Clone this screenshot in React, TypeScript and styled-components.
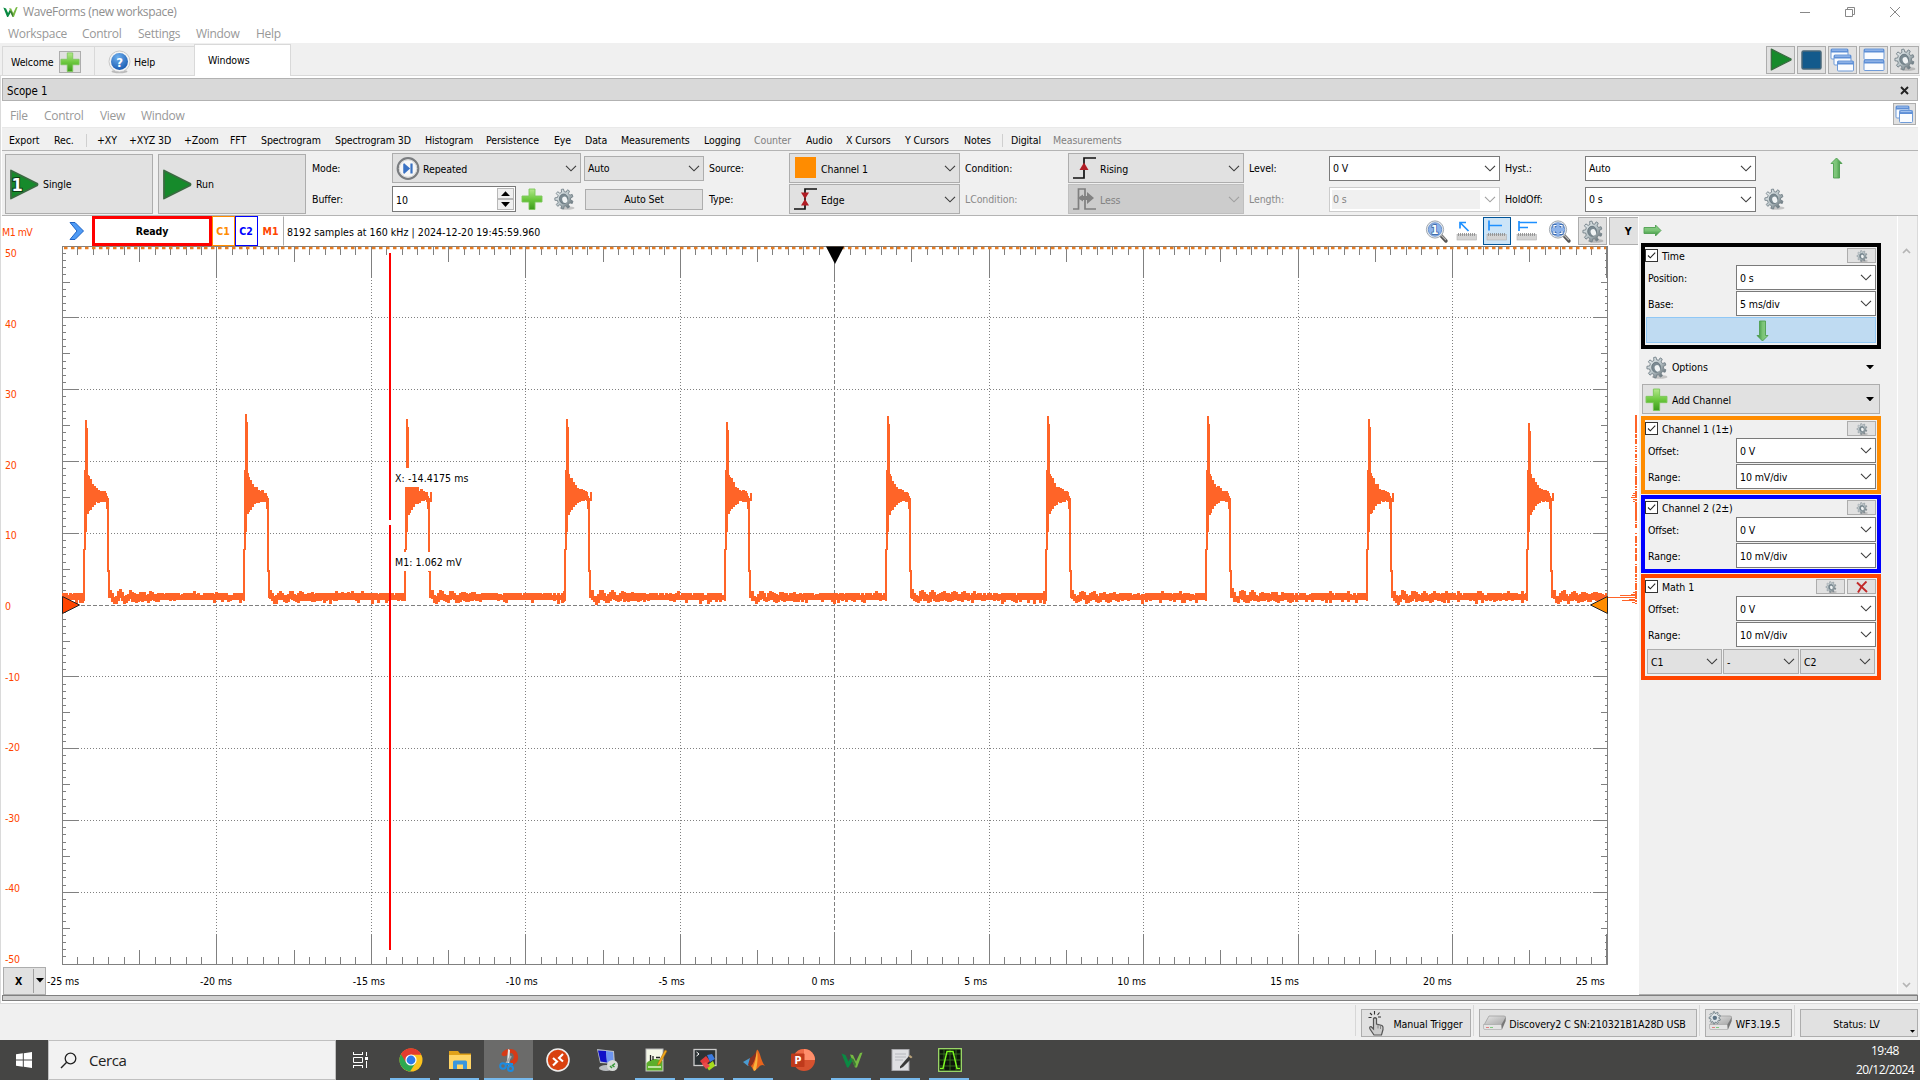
import React from "react";
import styled, { createGlobalStyle } from "styled-components";

const UI = `"DejaVu Sans Condensed", "DejaVu Sans", "Noto Sans", sans-serif`;
const SEGOE = `"Open Sans", "Noto Sans", sans-serif`;

const GlobalStyle = createGlobalStyle`
  * { box-sizing: border-box; }
  body { margin: 0; background: #fff; overflow: hidden; }
  svg { display: block; flex: none; }
`;

/* ---------- shell ---------- */
const Screen = styled.div`
  width: 1920px;
  height: 1080px;
  display: flex;
  flex-direction: column;
  background: #fff;
  font-family: ${UI};
  font-stretch: condensed;
  font-size: 10.5px;
  letter-spacing: -0.1px;
  color: #000;
  white-space: pre;
  overflow: hidden;
`;
const TitleBar = styled.div`
  height: 22px;
  display: flex;
  align-items: center;
  padding: 1px 20px 0 3px;
  gap: 5px;
  font-family: ${SEGOE};
  font-stretch: normal;
  font-size: 12px;
  letter-spacing: -0.35px;
  color: #8f8f8f;
`;
const WindowButtons = styled.div`
  margin-left: auto;
  display: flex;
  align-items: center;
  gap: 35px;
`;
const MenuBar = styled.div<{ $h: number; $left: number }>`
  height: ${p => p.$h}px;
  padding: 2px 0 0 ${p => p.$left}px;
  display: flex;
  align-items: center;
  font-family: ${SEGOE};
  font-stretch: normal;
  font-size: 12px;
  letter-spacing: -0.3px;
  color: #989898;
`;
const Cell = styled.span<{ $w: number; $muted?: boolean }>`
  width: ${p => p.$w}px;
  flex: none;
  ${p => p.$muted && "color:#808080;"}
`;
const TabBar = styled.div`
  height: 33px;
  flex: none;
  display: flex;
  align-items: flex-end;
  background: #f0f0f0;
  border-bottom: 1px solid #dadada;
  padding-left: 2px;
`;
const Tab = styled.div<{ $w: number; $pad: number; $gap: number; $active?: boolean }>`
  width: ${p => p.$w}px;
  height: ${p => (p.$active ? 32 : 29)}px;
  margin-bottom: ${p => (p.$active ? -1 : 0)}px;
  padding: ${p => (p.$active ? 0 : 1)}px 0 ${p => (p.$active ? 2 : 0)}px ${p => p.$pad}px;
  display: flex;
  align-items: center;
  gap: ${p => p.$gap}px;
  background: ${p => (p.$active ? "#fff" : "#f0f0f0")};
  border: 1px solid #d9d9d9;
  border-bottom: none;
  ${p => !p.$active && "border-right: none;"}
`;
const IconButton = styled.div<{ $w: number; $h: number; $on?: boolean }>`
  width: ${p => p.$w}px;
  height: ${p => p.$h}px;
  flex: none;
  display: flex;
  align-items: center;
  justify-content: center;
  background: ${p => (p.$on ? "#cce4f7" : "#e1e1e1")};
  border: 1px solid ${p => (p.$on ? "#005499" : "#adadad")};
`;
const TabTools = styled.div`
  margin-left: auto;
  display: flex;
  align-self: center;
  gap: 2px;
  padding: 1px 1px 0 0;
`;
const Workspace = styled.div`
  height: 928px;
  flex: none;
  padding: 2px 2px 0 1px;
  border-left: 1px solid #dadada;
  border-bottom: 1px solid #dadada;
  background: #fff;
  display: flex;
  flex-direction: column;
`;
const ScopeTitle = styled.div`
  height: 23px;
  flex: none;
  display: flex;
  align-items: center;
  justify-content: space-between;
  padding: 2px 8px 0 4px;
  background: #d9d9d9;
  border: 1px solid #b2b2b2;
  font-size: 11.4px;
`;
const ScopeMenu = styled.div`
  height: 26px;
  flex: none;
  display: flex;
  align-items: center;
  justify-content: space-between;
  padding-right: 2px;
`;
const ToolStrip = styled.div`
  height: 24px;
  flex: none;
  display: flex;
  align-items: center;
  padding: 2px 0 0 7px;
  background: #f0f0f0;
  border-top: 1px solid #e9e9e9;
  border-bottom: 1px solid #b4b4b4;
`;
const Divider = styled.span<{ $m: number }>`
  width: 1px;
  height: 13px;
  background: #cfcfcf;
  margin-right: ${p => p.$m}px;
`;

/* ---------- control panel ---------- */
const Controls = styled.div`
  height: 65px;
  flex: none;
  display: flex;
  padding: 2px 0 0 3px;
  background: #f0f0f0;
  border-bottom: 1px solid #b4b4b4;
`;
const BigButton = styled.div`
  width: 148px;
  height: 60px;
  margin: 1px 5px 0 0;
  padding-left: 3px;
  display: flex;
  align-items: center;
  gap: 4px;
  background: #e1e1e1;
  border: 1px solid #adadad;
`;
const Settings = styled.div`
  margin-left: 1px;
  display: grid;
  grid-template-columns: 80px 192px 125px 80px 176px 103px 181px 80px 176px 80px 178px 67px auto;
  grid-template-rows: 30px 30px;
  row-gap: 1px;
  align-items: center;
`;
const Label = styled.span<{ $muted?: boolean }>`
  color: ${p => (p.$muted ? "#8a8a8a" : "#000")};
`;
type Look = "button" | "edit" | "off" | "offEdit";
const looks: Record<Look, [string, string, string]> = {
  button: ["#e1e1e1", "#adadad", "#000"],
  edit: ["#ffffff", "#7a7a7a", "#000"],
  off: ["#cccccc", "#bfbfbf", "#838383"],
  offEdit: ["#f0f0f0", "#cccccc", "#838383"],
};
const ComboBox = styled.div<{ $w: number; $h: number; $look: Look }>`
  width: ${p => p.$w}px;
  height: ${p => p.$h}px;
  flex: none;
  padding: 0 3px 0 3px;
  display: flex;
  align-items: center;
  gap: 3px;
  background: ${p => looks[p.$look][0]};
  border: 1px solid ${p => looks[p.$look][1]};
  color: ${p => looks[p.$look][2]};
  ${p => p.$look === "offEdit" && "box-shadow: inset 0 0 0 2px #fff, inset -19px 0 0 #fff;"}
`;
const ComboText = styled.span<{ $low: boolean }>`
  padding-top: ${p => (p.$low ? 2 : 0)}px;
`;
const Push = styled.span`
  margin-left: auto;
  display: flex;
`;
const Swatch = styled.span`
  width: 21px;
  height: 21px;
  margin: 0 2px 2px 2px;
  background: #ff8c00;
`;
const BufferRow = styled.div`
  display: flex;
  align-items: center;
`;
const Spin = styled.div`
  width: 124px;
  height: 26px;
  padding: 0 1px 0 3px;
  display: flex;
  align-items: center;
  justify-content: space-between;
  background: #fff;
  border: 1px solid #7a7a7a;
`;
const SpinText = styled.span`
  padding-top: 2px;
`;
const SpinButtons = styled.div`
  width: 17px;
  display: grid;
  grid-template-rows: 11px 11px;
`;
const SpinButton = styled.div`
  display: flex;
  align-items: center;
  justify-content: center;
  background: #f0f0f0;
  border: 1px solid #b8b8b8;
`;
const Gap = styled.span<{ $w: number }>`
  width: ${p => p.$w}px;
  flex: none;
`;
const PlainButton = styled.div`
  width: 118px;
  height: 21px;
  margin-left: 1px;
  display: flex;
  align-items: center;
  justify-content: center;
  background: #e1e1e1;
  border: 1px solid #adadad;
`;

/* ---------- main area ---------- */
const Main = styled.div`
  height: 779px;
  flex: none;
  display: flex;
`;
const PlotColumn = styled.div`
  width: 1637px;
  flex: none;
  display: flex;
  flex-direction: column;
  background: #fff;
`;
const InfoRow = styled.div`
  height: 30px;
  flex: none;
  display: flex;
  align-items: center;
`;
const UnitLabel = styled.span`
  width: 67px;
  padding-top: 2px;
  color: #ff4500;
  letter-spacing: -0.5px;
`;
const Ready = styled.div`
  width: 120px;
  height: 30px;
  margin-left: 7px;
  display: flex;
  align-items: center;
  justify-content: center;
  border: 3px solid #f00;
  font-weight: bold;
`;
const Chip = styled.div<{ $c: string; $w: number; $b: string }>`
  width: ${p => p.$w}px;
  height: 30px;
  padding-right: 1px;
  display: flex;
  align-items: center;
  justify-content: center;
  font-weight: bold;
  color: ${p => p.$c};
  border-width: 1px;
  border-style: solid;
  border-color: ${p => p.$b};
`;
const Samples = styled.span`
  margin-left: 3px;
  padding-top: 1px;
  letter-spacing: 0.05px;
`;
const PlotTools = styled.div`
  margin-left: auto;
  margin-right: 1px;
  display: flex;
  align-items: center;
`;
const YButton = styled.div`
  width: 29px;
  height: 28px;
  margin-left: 2px;
  display: flex;
  align-items: center;
  justify-content: center;
  padding-left: 8px;
  background: #e1e1e1;
  border: 1px solid #adadad;
  border-right: none;
  font-weight: bold;
`;
const XAxisRow = styled.div`
  height: 29px;
  display: flex;
  align-items: center;
  padding-left: 1px;
`;
const XButton = styled.div`
  width: 43px;
  height: 28px;
  display: flex;
  align-items: center;
  background: #e1e1e1;
  border: 1px solid #adadad;
  font-weight: bold;
`;
const XText = styled.span`
  width: 30px;
  height: 24px;
  line-height: 24px;
  text-align: center;
  border-right: 1px solid #a0a0a0;
  margin-right: 2px;
`;
const Splitter = styled.div`
  height: 6px;
  flex: none;
  background: #d0d0d0;
  border: 1px solid #808080;
`;

/* ---------- side panel ---------- */
const Side = styled.div`
  flex: 1;
  display: flex;
  background: #f0f0f0;
  border-right: 1px solid #dadada;
  border-bottom: 1px solid #adadad;
`;
const SideList = styled.div`
  width: 258px;
  padding-left: 2px;
  display: flex;
  flex-direction: column;
`;
const SideTop = styled.div`
  height: 27px;
  flex: none;
  padding: 8px 0 0 2px;
`;
const Group = styled.div<{ $c: string; $h: number; $gap: number }>`
  width: 240px;
  height: ${p => p.$h}px;
  flex: none;
  margin-bottom: ${p => p.$gap}px;
  padding-right: 1px;
  border: 4px solid ${p => p.$c};
`;
const GroupHead = styled.div`
  height: 17px;
  margin-bottom: 1px;
  display: flex;
  align-items: center;
  gap: 2px;
`;
const GroupName = styled.span`
  margin: 0 auto 0 2px;
`;
const Field = styled.div`
  height: 26px;
  display: flex;
  align-items: flex-start;
`;
const FieldName = styled.span`
  width: 91px;
  padding: 7px 0 0 3px;
`;
const BlueButton = styled.div`
  height: 26px;
  margin-left: 1px;
  padding: 2px 0 0 2px;
  display: flex;
  align-items: center;
  justify-content: center;
  background: #bfdbf2;
  border: 1px solid #90c8f6;
`;
const MathRow = styled.div`
  display: flex;
  gap: 1px;
  padding: 1px 0 0 2px;
`;
const WideButton = styled.div<{ $flat?: boolean; $h: number; $gap: number }>`
  width: 238px;
  height: ${p => p.$h}px;
  flex: none;
  margin: 0 0 ${p => p.$gap}px 1px;
  padding: 0 5px 0 2px;
  display: flex;
  align-items: center;
  gap: 4px;
  border: 1px solid ${p => (p.$flat ? "transparent" : "#adadad")};
  background: ${p => (p.$flat ? "transparent" : "#e1e1e1")};
`;
const ScrollBar = styled.div`
  width: 19px;
  height: 100%;
  padding: 32px 2px 6px 0;
  display: flex;
  flex-direction: column;
  align-items: center;
  justify-content: space-between;
  border-left: 1px solid #fff;
`;

/* ---------- status + taskbar ---------- */
const StatusBar = styled.div`
  height: 36px;
  flex: none;
  display: flex;
  align-items: flex-end;
  justify-content: flex-end;
  padding: 0 2px 3px 0;
  background: #f0f0f0;
`;
const StatusButton = styled.div<{ $w: number; $m: number }>`
  width: ${p => p.$w}px;
  height: 28px;
  margin-left: ${p => p.$m}px;
  padding: 0 2px;
  display: flex;
  align-items: center;
  justify-content: center;
  background: #e1e1e1;
  border: 1px solid #adadad;
`;
const StatusSep = styled.span<{ $m: number }>`
  width: 1px;
  height: 31px;
  margin-left: ${p => p.$m}px;
  background: #d7d7d7;
  align-self: center;
`;
const StatusText = styled.span`
  flex: 1;
  padding-top: 2px;
  text-align: center;
  font-size: 10.6px;
`;
const Corner = styled.span`
  align-self: flex-end;
  padding-bottom: 3px;
`;
const TaskBar = styled.div`
  height: 40px;
  flex: none;
  display: flex;
  background: #454544;
  font-family: ${SEGOE};
  font-stretch: normal;
`;
const Start = styled.div`
  width: 48px;
  display: flex;
  align-items: center;
  justify-content: center;
`;
const Search = styled.div`
  width: 288px;
  padding-left: 11px;
  display: flex;
  align-items: center;
  gap: 12px;
  background: #f2f2f2;
  border: 1px solid #c0c0c0;
  font-size: 15px;
  letter-spacing: -0.4px;
  color: #222;
`;
const Task = styled.div<{ $line?: boolean; $active?: boolean }>`
  width: 49px;
  display: flex;
  align-items: center;
  justify-content: center;
  background: ${p => (p.$active ? "#6b6b6a" : "transparent")};
  box-shadow: ${p => (p.$line && p.$active ? "inset 0 -2px #76b9ed" : "none")};
  ${p =>
    p.$line && !p.$active
      ? "background: linear-gradient(#76b9ed,#76b9ed) no-repeat 4px 100% / 40px 2px;"
      : ""}
`;
const Clock = styled.div`
  margin-left: auto;
  width: 70px;
  padding-top: 1px;
  text-align: center;
  font-size: 12px;
  line-height: 19px;
  letter-spacing: -0.55px;
  color: #fff;
`;

/* ---------- icons ---------- */
const gearPath = (() => {
  const pts: string[] = [];
  const teeth = 9;
  for (let i = 0; i < teeth; i++) {
    const a = (i / teeth) * Math.PI * 2 + 0.15;
    const s = (Math.PI * 2) / teeth;
    [
      [7.3, 0],
      [10, 0.1],
      [10, 0.45],
      [7.3, 0.58],
    ].forEach(([r, f]) => {
      const t = a + s * f;
      pts.push(`${(11 + r * 0.92 * Math.cos(t)).toFixed(2)} ${(11 + r * Math.sin(t)).toFixed(2)}`);
    });
  }
  return "M" + pts.join("L") + "Z";
})();
const Gear = ({ s = 22 }: { s?: number }) => (
  <svg width={s} height={s} viewBox="0 0 22 22">
    <defs>
      <linearGradient id="gearFill" x1="0" y1="0" x2="1" y2="1">
        <stop offset="0" stopColor="#f2f6f7" />
        <stop offset=".5" stopColor="#b9c4c8" />
        <stop offset="1" stopColor="#4a575d" />
      </linearGradient>
    </defs>
    <ellipse cx="14" cy="20" rx="7.5" ry="1.8" fill="#000" opacity=".18" />
    <path d={gearPath} fill="url(#gearFill)" stroke="#75828a" strokeWidth=".9" />
    <ellipse cx="10.6" cy="10.8" rx="4.2" ry="4.8" fill="#7b8a92" stroke="#5e6d76" strokeWidth=".7" />
    <ellipse cx="11.8" cy="11.8" rx="2.5" ry="3.2" fill="#f0f3f4" transform="rotate(-20 11.8 11.8)" />
  </svg>
);
const Plus = ({ s = 22 }: { s?: number }) => (
  <svg width={s} height={s} viewBox="0 0 22 22">
    <defs>
      <linearGradient id="plusFill" x1="0" y1="0" x2="0" y2="1">
        <stop offset="0" stopColor="#b4e88c" />
        <stop offset=".5" stopColor="#6cc83e" />
        <stop offset="1" stopColor="#3c9a1c" />
      </linearGradient>
    </defs>
    <path d="M8 1h6v7h7v6h-7v7.5H8V14H1V8h7z" fill="url(#plusFill)" stroke="#7cc75a" strokeWidth=".9" strokeLinejoin="round" />
  </svg>
);
const Play = ({ w = 30, h = 31, one }: { w?: number; h?: number; one?: boolean }) => (
  <svg width={w} height={h} viewBox="0 0 30 31">
    <path d="M2 1.5L28 14.5Q29 15.500 28 16.500L2 29.500Z" fill="#168a2b" stroke="#3b6b42" strokeWidth="1.8" strokeLinejoin="round" />
    {one && (
      <text x="8" y="22" fontFamily={UI} fontSize="18" fontWeight="bold" textAnchor="middle" fill="#fff" stroke="#0b3b14" strokeWidth="2" paintOrder="stroke">
        1
      </text>
    )}
  </svg>
);
const Chevron = ({ c = "#3c3c3c" }: { c?: string }) => (
  <svg width="12" height="7" viewBox="0 0 12 7">
    <path d="M1 .8L6 5.800L11 .8" fill="none" stroke={c} strokeWidth="1.15" />
  </svg>
);
const Caret = ({ up, w = 8, c = "#000" }: { up?: boolean; w?: number; c?: string }) => (
  <svg width={w} height={w / 2 + 0.5} viewBox="0 0 8 4.500">
    <path d={up ? "M0 4.500L4 .2L8 4.500Z" : "M0 0L4 4.400L8 0Z"} fill={c} />
  </svg>
);
const GreenArrow = ({ rot = 0 }: { rot?: number }) => (
  <svg width={rot === 90 ? 19 : 13} height={rot === 90 ? 13 : 22} viewBox={rot === 90 ? "-9.500 -6.500 19 13" : "-6.500 -11 13 22"}>
    <defs>
      <linearGradient id="arrowFill" x1="0" y1="0" x2="1" y2="0">
        <stop offset="0" stopColor="#8fcf8c" />
        <stop offset=".5" stopColor="#79c375" />
        <stop offset="1" stopColor="#2f8a34" />
      </linearGradient>
    </defs>
    <path
      transform={`rotate(${rot})`}
      d={rot === 90 ? "M0 -8.500L5.500 -3H3V8.500H-3V-3H-5.500Z" : "M0 -10L5.500 -4.500H3V10H-3V-4.500H-5.500Z"}
      fill="url(#arrowFill)"
      stroke="#4f9f50"
      strokeWidth=".9"
    />
  </svg>
);
const Win = ({ x, y, w, h }: { x: number; y: number; w: number; h: number }) => (
  <g>
    <rect x={x} y={y} width={w} height={h} rx="1" fill="#fafcff" stroke="#6f9bd8" strokeWidth="1" />
    <rect x={x} y={y} width={w} height="3.500" fill="#5e8fd6" />
    <rect x={x + 1} y={y + 0.6} width={w - 2} height="1" fill="#a8c6f0" />
  </g>
);
const Logo = ({ w, h }: { w: number; h: number }) => (
  <svg width={w} height={h} viewBox="0 0 22 16">
    <path d="M.5 1.500L4.500 3L7.500 9.500L9.500 5.500L12.500 7L7.500 15.500H6Z" fill="#0a8a43" />
    <path d="M9 2.500L12 3L15 9.500L19 1L21.500 .5L16 15.500H14Z" fill="#76b943" />
    <path d="M9.500 5.500L12.500 7L15 12L14 15.500Z" fill="#3c7a34" />
  </svg>
);
const Question = () => (
  <svg width="23" height="24" viewBox="0 0 23 24">
    <defs>
      <radialGradient id="q" cx=".4" cy=".25" r=".9">
        <stop offset="0" stopColor="#6fb0ee" />
        <stop offset="1" stopColor="#0c4da8" />
      </radialGradient>
    </defs>
    <ellipse cx="11.500" cy="21.500" rx="8" ry="1.800" fill="#bbb" />
    <circle cx="11.500" cy="11.500" r="10.500" fill="#f5f5f5" stroke="#c9c9c9" />
    <circle cx="11.500" cy="11.500" r="8.500" fill="url(#q)" />
    <text x="11.500" y="16.500" textAnchor="middle" fontFamily={UI} fontWeight="bold" fontSize="13" fill="#fff">?</text>
  </svg>
);
const RepeatIcon = () => (
  <svg width="24" height="25" viewBox="0 0 24 25">
    <circle cx="12" cy="12.500" r="10.300" fill="#f6f6f6" stroke="#7a7d80" strokeWidth="2.200" />
    <circle cx="12" cy="12.500" r="8.700" fill="none" stroke="#d5d5d5" />
    <path d="M8 8V17M8.500 8.500L13 12.500L8.500 16.500Z" fill="#3a72c4" stroke="#3a72c4" strokeWidth="1.500" />
    <path d="M15.500 7.500V17.500" stroke="#3a72c4" strokeWidth="2.200" />
  </svg>
);
const EdgeIcon = ({ kind }: { kind: "rise" | "both" | "less" }) =>
  kind === "less" ? (
    <svg width="25" height="24" viewBox="0 0 25 24">
      <path d="M1 22H6.500V2H13V22H24" fill="none" stroke="#7f7f7f" strokeWidth="1.700" />
      <path d="M5.500 11L11 7.500V9H15V5L22 11L15 17V13H11V14.500Z" fill="#828282" />
    </svg>
  ) : (
    <svg width="25" height="24" viewBox="0 0 25 24">
      <path d="M1 22H12V2H24" fill="none" stroke="#111" strokeWidth="1.700" />
      {kind === "rise" ? (
        <path d="M12 6.500L16.500 14H7.500Z" fill="#b01c24" />
      ) : (
        <path d="M8 5.500H16L12 12L16 18.500H8L12 12Z" fill="#b01c24" />
      )}
    </svg>
  );
const Lens = ({ one }: { one?: boolean }) => (
  <svg width="24" height="25" viewBox="0 0 24 25">
    <path d="M15.500 16L21 22" stroke="#555" strokeWidth="3.400" strokeLinecap="round" />
    <path d="M16 16L21 21" stroke="#b5b5b5" strokeWidth="1.200" />
    <circle cx="10" cy="10.500" r="8.600" fill="#e4e9ee" stroke="#a2a9b1" />
    <circle cx="10" cy="10.500" r="6.700" fill="#8db3ea" stroke="#6f96cf" />
    {one ? (
      <text x="9.800" y="15" textAnchor="middle" fontFamily={UI} fontSize="12" fontWeight="bold" fill="#fff" stroke="#335f9f" strokeWidth="1.400" paintOrder="stroke">1</text>
    ) : (
      <g fill="none">
        <path d="M6 9V6.500H8.500M11.500 6.500H14V9M14 12V14.500H11.500M8.500 14.500H6V12" stroke="#3f6fb5" strokeWidth="2.900" />
        <path d="M6 9V6.500H8.500M11.500 6.500H14V9M14 12V14.500H11.500M8.500 14.500H6V12" stroke="#fff" strokeWidth="1.200" />
      </g>
    )}
  </svg>
);
const RulerIcon = ({ kind }: { kind: "arrow" | "single" | "multi" }) => (
  <svg width="22" height="22" viewBox="0 0 22 22">
    <rect x="1" y="14.500" width="19.500" height="5.500" fill="#d3d3d3" stroke="#b0b0b0" strokeWidth=".6" />
    <path d="M2.500 13v3M4.500 13v3M6.500 13v3M8.500 13v3M10.500 13v3M12.500 13v3M14.500 13v3M16.500 13v3M18.500 13v3" stroke="#909090" strokeWidth=".9" />
    <g fill="none" stroke="#1e90ff" strokeWidth="1.700">
      {kind === "arrow" && <path d="M4 8.500V2.500H10M4 2.500L12.500 11" />}
      {kind === "single" && <path d="M3 .5V10.500M3 5.500H16" />}
      {kind === "multi" && <path d="M3 1V11M3 2.500H21M3 7.500H12" />}
    </g>
  </svg>
);
const CheckBox = () => (
  <svg width="13" height="13" viewBox="0 0 13 13">
    <rect x=".5" y=".5" width="12" height="12" fill="#fff" stroke="#333" />
    <path d="M3 6.500L5.300 8.800L10.200 3.600" fill="none" stroke="#222" strokeWidth="1.100" />
  </svg>
);
const Board = ({ gear }: { gear?: boolean }) => (
  <svg width="25" height="24" viewBox="0 0 25 24">
    <defs>
      <linearGradient id="boardTop" x1="0" y1="0" x2="1" y2="1">
        <stop offset="0" stopColor="#e6e6e6" />
        <stop offset="1" stopColor="#a4a4a4" />
      </linearGradient>
    </defs>
    <path d="M7 5H22Q24 5 23.500 7L19.500 14H2Z" fill="url(#boardTop)" stroke="#9a9a9a" strokeWidth=".7" />
    <path d="M1.500 13.500H19.500V18.500H3Q1.500 18.500 1.500 17Z" fill="#e4e4e4" stroke="#a5a5a5" strokeWidth=".6" />
    <path d="M19.500 13.500L23.700 6.500V10L20 18.500Z" fill="#777" />
    <path d="M4 16.500h3" stroke="#e08080" />
    <path d="M8 16.500h3" stroke="#80c880" />
    {gear && (
      <g transform="scale(.62)">
        <path d={gearPath} fill="#dfe5e8" stroke="#5f7078" strokeWidth="1.200" />
        <circle cx="11" cy="11" r="3.500" fill="#5d7486" />
      </g>
    )}
  </svg>
);
const Hand = () => (
  <svg width="20" height="26" viewBox="0 0 20 26">
    <path d="M6.500 1V4.500M2 3L4 5M11.500 2.500L9.500 5M.5 7.500H3.500M10 7H13" stroke="#333" strokeWidth="1.100" />
    <path d="M5.500 8.500Q7 7 8.500 8.500V14L14 15.500Q15.500 16.500 15 19.500L13.500 25H6L2 19Q1 16.500 3 16.500L5.500 19Z" fill="#ccc" stroke="#555" strokeWidth="1.200" />
    <path d="M10 14.500v4M12.500 15v4" stroke="#777" strokeWidth=".8" />
  </svg>
);

/* ---------- plot ---------- */
const TOP = 246;
const L = 62.5;
const DX = 154.45;
const T = 0.5;
const DY = 71.8;
const R = L + DX * 10;
const B = T + DY * 10;
const snapX = (v: number) => Math.round(v - 0.5) + 0.5;
const snapY = (v: number) => Math.floor(v - 0.35) + 0.5;

const rand = (() => {
  let s = 1234567;
  return () => {
    s = (s * 1103515245 + 12345) & 0x7fffffff;
    return s / 0x7fffffff;
  };
})();

const peaks = [420, 414, 419, 419, 422, 416, 416, 416, 419, 423];
const wave = (() => {
  let d = "";
  let hi = 593;
  let lo = 600;
  for (let x = 63; x < 1607; x++) {
    const k = Math.max(0, Math.min(9, Math.floor((x - 80) / 160.35)));
    const t = Math.round(x - (86 + 160.35 * k));
    let a: number;
    let b: number;
    if (t === -2) [a, b] = [549, 601];
    else if (t === -1) [a, b] = [470, 550];
    else if (t === 0) [a, b] = [peaks[k], 532];
    else if (t === 1) [a, b] = [peaks[k] + 8, 478];
    else if (t > 1 && t < 21) {
      if (t % 2 === 0 || t === 3) {
        const amp = 16 * Math.exp(-(t - 2) / 5.5) + 2.5;
        const mid = 494 + t * 0.15;
        hi = mid - amp - rand() * 3;
        lo = mid + amp * 1.05 + rand() * 2;
      }
      [a, b] = [hi, lo];
    } else if (t === 21) [a, b] = [496, 509];
    else if (t === 22) [a, b] = [498, 572];
    else if (t === 23) [a, b] = [570, 598];
    else if (t > 23 && t < 75) {
      if (x % 2 === 0) {
        const ripple = Math.cos(((t - 34) / 10.5) * Math.PI * 2) * 4 * Math.exp(-(t - 25) / 32);
        hi = 594 - ripple - rand() * 2;
        lo = 600 - ripple * 0.6 + rand() * 2.5;
      }
      [a, b] = [hi, lo];
    } else {
      if (x % 2 === 0) {
        hi = 593 + (rand() < 0.3 ? rand() * 2.5 : 0) - (rand() < 0.07 ? 2 : 0);
        lo = 600 + (rand() < 0.35 ? rand() * 4 : 0);
      }
      [a, b] = [hi, lo];
    }
    d += `M${x} ${Math.round(a - TOP)}V${Math.round(b - TOP)}`;
  }
  return d;
})();

const histogram = (() => {
  let d = "";
  for (let y = 415; y < 604; y++) {
    if (y > 427 && rand() < 0.28) continue;
    d += `M1635 ${y + 0.5 - TOP}h2`;
  }
  [[493, 2], [495, 3], [497, 4], [499, 2], [501, 2], [592, 2], [594, 4], [595, 15], [597, 28], [599, 6], [600, 13], [602, 3]].forEach(([y, w]) => {
    d += `M${1635 - w} ${y + 0.5 - TOP}h${w}`;
  });
  return d;
})();

const ticks = (() => {
  let d = "";
  for (let i = 0; i <= 100; i++) {
    const x = snapX(L + (DX * i) / 10);
    const h = i % 10 === 0 ? 31 : i % 5 === 0 ? 15 : 8;
    d += `M${x} ${T}v${h}M${x} ${B}v${-h}`;
    const y = snapY(T + (DY * i) / 10);
    const w = i % 10 === 0 ? 15 : i % 5 === 0 ? 7 : 3;
    d += `M${L} ${y}h${w}M${snapX(R)} ${y}h${-w}`;
  }
  return d;
})();

const inner = [1, 2, 3, 4, 6, 7, 8, 9];

const Plot = () => (
  <svg width="1637" height="720" viewBox="2 0 1637 720" fontFamily={UI} fontSize="10.500">
    <g stroke="#808080" fill="none" shapeRendering="crispEdges">
      {inner.map(i => (
        <path key={i} strokeDasharray="1 2" d={`M${snapX(L + DX * i)} 31V${B - 31}M${L + 15.5} ${snapY(T + DY * i)}H${R - 15}`} />
      ))}
      <path strokeDasharray="4 2" d={`M${snapX(L + DX * 5)} 20V${B - 15}`} />
      <path strokeDasharray="4 2" d={`M${L + 18.5} ${snapY(T + DY * 5)}H${R - 18}`} />
      <path d={ticks} />
      <path d={`M${L} ${T}H${snapX(R)}V${B}H${L}Z`} />
    </g>
    <path d={`M${L + 1.5} 2H${R - 1}`} stroke="#e87d22" strokeWidth="2.500" strokeDasharray="3.500 3.500" />
    <path d={wave} stroke="#ff6428" strokeWidth="2" shapeRendering="crispEdges" />
    <path d={histogram} stroke="#ff6428" strokeWidth="1" shapeRendering="crispEdges" />
    <path d="M826 0.500H844L835 18Z" fill="#000" />
    <path d="M62.500 350.500L79.500 359L62.500 367.500Z" fill="#ff4500" stroke="#222" />
    <path d="M1607.500 350.500L1590.500 359L1607.500 367.500Z" fill="#ff8c00" stroke="#222" />
    <path d="M390 7V274M390 279V704" stroke="#f00" strokeWidth="2" />
    <rect x="393" y="222" width="78" height="19" fill="#fff" />
    <rect x="393" y="306" width="78" height="19" fill="#fff" />
    <g fill="#000">
      <text x="395" y="236" letterSpacing="0.1">X: -14.4175 ms</text>
      <text x="395" y="320" letterSpacing="0.05">M1: 1.062 mV</text>
    </g>
    <g fill="#ff4500">
      {[50, 40, 30, 20, 10, 0, -10, -20, -30, -40, -50].map((v, i) => (
        <text key={v} x="5" y={11 + i * 70.6} letterSpacing="-0.2">
          {v}
        </text>
      ))}
    </g>
  </svg>
);

/* ---------- composite controls ---------- */
const Combo = ({ w, h = 25, look = "edit", icon, children }: { w: number; h?: number; look?: Look; icon?: React.ReactNode; children: React.ReactNode }) => (
  <ComboBox $w={w} $h={h} $look={look}>
    {icon}
    <ComboText $low={!!icon}>{children}</ComboText>
    <Push>
      <Chevron c={look.startsWith("off") ? "#a0a0a0" : undefined} />
    </Push>
  </ComboBox>
);
const Row = ({ name, value }: { name: string; value: string }) => (
  <Field>
    <FieldName>{name}</FieldName>
    <Combo w={140}>{value}</Combo>
  </Field>
);
const Head = ({ name, closable }: { name: string; closable?: boolean }) => (
  <GroupHead>
    <CheckBox />
    <GroupName>{name}</GroupName>
    <IconButton $w={29} $h={15}>
      <Gear s={12} />
    </IconButton>
    {closable && (
      <IconButton $w={29} $h={15}>
        <svg width="12" height="12" viewBox="0 0 12 12">
          <path d="M1 1.500L11 11M10.500 .5Q5 5 2 11.500" stroke="#c22a2a" strokeWidth="1.900" fill="none" />
        </svg>
      </IconButton>
    )}
  </GroupHead>
);

const mainMenu: [string, number][] = [["Workspace", 74], ["Control", 56], ["Settings", 58], ["Window", 60], ["Help", 40]];
const scopeMenu: [string, number][] = [["File", 34], ["Control", 56], ["View", 41], ["Window", 50]];
const tools: [string, number, boolean?][] = [
  ["+XY", 32], ["+XYZ 3D", 55], ["+Zoom", 46], ["FFT", 31], ["Spectrogram", 74], ["Spectrogram 3D", 90], ["Histogram", 61],
  ["Persistence", 68], ["Eye", 31], ["Data", 36], ["Measurements", 83], ["Logging", 50], ["Counter", 52, true], ["Audio", 40],
  ["X Cursors", 59], ["Y Cursors", 59], ["Notes", 38],
];

const TaskIcon = ({ children }: { children: React.ReactNode }) => (
  <svg width="24" height="24" viewBox="0 0 24 24">{children}</svg>
);

export default function App() {
  return (
    <Screen>
      <GlobalStyle />
      <TitleBar>
        <Logo w={15} h={12} />
        <span>WaveForms (new workspace)</span>
        <WindowButtons>
          <svg width="10" height="10" viewBox="0 0 10 10"><path d="M0 5.500H10" stroke="#888" /></svg>
          <svg width="10" height="10" viewBox="0 0 10 10"><path d="M.5 2.500H7.500V9.500H.5ZM2.500 2.500V.5H9.500V7.500H7.500" fill="none" stroke="#888" /></svg>
          <svg width="10" height="10" viewBox="0 0 10 10"><path d="M0 0L10 10M10 0L0 10" stroke="#888" /></svg>
        </WindowButtons>
      </TitleBar>
      <MenuBar $h={21} $left={8}>
        {mainMenu.map(([t, w]) => <Cell key={t} $w={w}>{t}</Cell>)}
      </MenuBar>
      <TabBar>
        <Tab $w={92} $pad={8} $gap={6}>
          <span>Welcome</span>
          <IconButton $w={22} $h={22}><Plus s={20} /></IconButton>
        </Tab>
        <Tab $w={100} $pad={13} $gap={3}>
          <Question />
          <span>Help</span>
        </Tab>
        <Tab $w={97} $pad={13} $gap={0} $active>
          <span>Windows</span>
        </Tab>
        <TabTools>
          <IconButton $w={29} $h={28}><Play w={24} h={23} /></IconButton>
          <IconButton $w={29} $h={28}>
            <svg width="21" height="20"><rect x="1" y="1" width="19" height="18" rx="1.500" fill="#125a8c" stroke="#49687a" strokeWidth="1.500" /></svg>
          </IconButton>
          <IconButton $w={29} $h={28}>
            <svg width="25" height="24"><Win x={1} y={1} w={17} h={10} /><Win x={4} y={7} w={17} h={10} /><Win x={7.5} y={13} w={16} h={10} /></svg>
          </IconButton>
          <IconButton $w={29} $h={28}>
            <svg width="22" height="24"><Win x={1} y={1} w={20} h={10.5} /><Win x={1} y={12} w={20} h={10.5} /></svg>
          </IconButton>
          <IconButton $w={29} $h={28}><Gear s={23} /></IconButton>
        </TabTools>
      </TabBar>
      <Workspace>
        <ScopeTitle>
          <span>Scope 1</span>
          <svg width="9" height="9" viewBox="0 0 9 9"><path d="M1 1L8 8M8 1L1 8" stroke="#222" strokeWidth="1.900" /></svg>
        </ScopeTitle>
        <ScopeMenu>
          <MenuBar $h={26} $left={8}>
            {scopeMenu.map(([t, w]) => <Cell key={t} $w={w}>{t}</Cell>)}
          </MenuBar>
          <IconButton $w={23} $h={22}>
            <svg width="19" height="19"><Win x={1} y={1} w={13} h={12} /><Win x={4.5} y={5.5} w={13} h={12} /></svg>
          </IconButton>
        </ScopeMenu>
        <ToolStrip>
          <Cell $w={45}>Export</Cell>
          <Cell $w={32}>Rec.</Cell>
          <Divider $m={10} />
          {tools.map(([t, w, m]) => <Cell key={t} $w={w} $muted={m}>{t}</Cell>)}
          <Divider $m={8} />
          <Cell $w={42}>Digital</Cell>
          <Cell $w={80} $muted>Measurements</Cell>
        </ToolStrip>
        <Controls>
          <BigButton><Play one /><span>Single</span></BigButton>
          <BigButton><Play /><span>Run</span></BigButton>
          <Settings>
            <Label>Mode:</Label>
            <Combo w={189} h={30} look="button" icon={<RepeatIcon />}>Repeated</Combo>
            <Combo w={120} look="button">Auto</Combo>
            <Label>Source:</Label>
            <Combo w={171} h={30} look="button" icon={<Swatch />}>Channel 1</Combo>
            <Label>Condition:</Label>
            <Combo w={176} h={30} look="button" icon={<EdgeIcon kind="rise" />}>Rising</Combo>
            <Label>Level:</Label>
            <Combo w={171}>0 V</Combo>
            <Label>Hyst.:</Label>
            <Combo w={171}>Auto</Combo>
            <span />
            <GreenArrow />

            <Label>Buffer:</Label>
            <BufferRow>
              <Spin>
                <SpinText>10</SpinText>
                <SpinButtons>
                  <SpinButton><Caret up w={9} /></SpinButton>
                  <SpinButton><Caret w={9} /></SpinButton>
                </SpinButtons>
              </Spin>
              <Gap $w={5} />
              <Plus />
              <Gap $w={10} />
              <Gear />
            </BufferRow>
            <PlainButton>Auto Set</PlainButton>
            <Label>Type:</Label>
            <Combo w={171} h={30} look="button" icon={<EdgeIcon kind="both" />}>Edge</Combo>
            <Label $muted>LCondition:</Label>
            <Combo w={176} h={30} look="off" icon={<EdgeIcon kind="less" />}>Less</Combo>
            <Label $muted>Length:</Label>
            <Combo w={171} look="offEdit">0 s</Combo>
            <Label>HoldOff:</Label>
            <Combo w={171}>0 s</Combo>
            <Gear />
          </Settings>
        </Controls>
        <Main>
          <PlotColumn>
            <InfoRow>
              <UnitLabel>M1 mV</UnitLabel>
              <svg width="16" height="20" viewBox="0 0 16 20">
                <path d="M1 1.500H6L14.500 10L6 18.500H1L8 10Z" fill="#4f9bf5" stroke="#1f63c4" />
              </svg>
              <Ready>Ready</Ready>
              <Chip $c="#ff8c00" $b="#ff8c00" $w={23}>C1</Chip>
              <Chip $c="#0000ff" $b="#0000ff" $w={23}>C2</Chip>
              <Chip $c="#ff4500" $b="transparent #adadad transparent transparent" $w={26}>M1</Chip>
              <Samples>8192 samples at 160 kHz | 2024-12-20 19:45:59.960</Samples>
              <PlotTools>
                <Lens one />
                <Gap $w={7} />
                <RulerIcon kind="arrow" />
                <Gap $w={5} />
                <IconButton $w={28} $h={28} $on><RulerIcon kind="single" /></IconButton>
                <Gap $w={5} />
                <RulerIcon kind="multi" />
                <Gap $w={10} />
                <Lens />
                <Gap $w={6} />
                <IconButton $w={29} $h={28}><Gear s={23} /></IconButton>
                <YButton>Y</YButton>
              </PlotTools>
            </InfoRow>
            <Plot />
            <XAxisRow>
              <XButton>
                <XText>X</XText>
                <Caret />
              </XButton>
              <Gap $w={1} />
              {[-25, -20, -15, -10, -5, 0, 5, 10, 15, 20, 25].map(v => (
                <Cell key={v} $w={v === 25 ? 40 : 152.9}>{v} ms</Cell>
              ))}
            </XAxisRow>
          </PlotColumn>
          <Side>
            <SideList>
              <SideTop><GreenArrow rot={90} /></SideTop>
              <Group $c="#000" $h={106} $gap={3}>
                <Head name="Time" />
                <Row name="Position:" value="0 s" />
                <Row name="Base:" value="5 ms/div" />
                <BlueButton><GreenArrow rot={180} /></BlueButton>
              </Group>
              <WideButton $flat $h={30} $gap={2}>
                <Gear s={23} />
                <span>Options</span>
                <Push><Caret /></Push>
              </WideButton>
              <WideButton $h={30} $gap={2}>
                <Plus s={23} />
                <ComboText $low>Add Channel</ComboText>
                <Push><Caret /></Push>
              </WideButton>
              <Group $c="#ff8c00" $h={78} $gap={1}>
                <Head name="Channel 1 (1±)" />
                <Row name="Offset:" value="0 V" />
                <Row name="Range:" value="10 mV/div" />
              </Group>
              <Group $c="#0000ff" $h={78} $gap={1}>
                <Head name="Channel 2 (2±)" />
                <Row name="Offset:" value="0 V" />
                <Row name="Range:" value="10 mV/div" />
              </Group>
              <Group $c="#ff4500" $h={106} $gap={0}>
                <Head name="Math 1" closable />
                <Row name="Offset:" value="0 V" />
                <Row name="Range:" value="10 mV/div" />
                <MathRow>
                  <Combo w={75} look="button">C1</Combo>
                  <Combo w={76} look="button">-</Combo>
                  <Combo w={75} look="button">C2</Combo>
                </MathRow>
              </Group>
            </SideList>
            <ScrollBar>
              <svg width="9" height="6"><path d="M1 5L4.500 1.500L8 5" fill="none" stroke="#b5b5b5" strokeWidth="1.700" /></svg>
              <svg width="9" height="6"><path d="M1 1L4.500 4.500L8 1" fill="none" stroke="#b5b5b5" strokeWidth="1.700" /></svg>
            </ScrollBar>
          </Side>
        </Main>
        <Splitter />
      </Workspace>
      <StatusBar>
        <StatusSep $m={0} />
        <StatusButton $w={110} $m={5}><Gap $w={4} /><Hand /><StatusText>Manual Trigger</StatusText></StatusButton>
        <StatusSep $m={2} />
        <StatusButton $w={218} $m={5}><Board /><StatusText>Discovery2 C SN:210321B1A28D USB</StatusText><Gap $w={6} /></StatusButton>
        <StatusSep $m={2} />
        <StatusButton $w={87} $m={5}><Board gear /><StatusText>WF3.19.5</StatusText><Gap $w={6} /></StatusButton>
        <StatusSep $m={2} />
        <StatusButton $w={118} $m={5}><StatusText>Status: LV</StatusText><Corner><Caret w={5} /></Corner></StatusButton>
      </StatusBar>
      <TaskBar>
        <Start>
          <svg width="16" height="16" viewBox="0 0 16 16"><path d="M0 2.300L6.800 1.300V7.600H0ZM7.800 1.200L16 0V7.600H7.800ZM0 8.400H6.800V14.700L0 13.700ZM7.800 8.400H16V16L7.800 14.800Z" fill="#fff" /></svg>
        </Start>
        <Search>
          <svg width="17" height="17" viewBox="0 0 17 17"><circle cx="10.500" cy="6.500" r="5.300" fill="none" stroke="#222" strokeWidth="1.300" /><path d="M6.700 10.300L1 16" stroke="#222" strokeWidth="1.400" /></svg>
          <span>Cerca</span>
        </Search>
        <Task>
          <svg width="17" height="16" viewBox="0 0 17 16"><path d="M1.500 0V3M10.500 0V3M1.500 2.500H10.500M1.500 5.500H10.500V10.500H1.500ZM1.500 16V13M10.500 16V13M1.500 13.500H10.500M14.500 0V4M14.500 9V16" fill="none" stroke="#fff" /><rect x="13" y="5" width="3" height="3" fill="#fff" /></svg>
        </Task>
        <Gap $w={1} />
        <Task $line>
          <TaskIcon>
            <circle cx="12" cy="12" r="11.500" fill="#fcc31e" />
            <path d="M12 12L2 6.200A11.500 11.500 0 0 1 22 6.400L12 6.400Z" fill="#e33b2e" />
            <path d="M2 6.200A11.500 11.500 0 0 0 11 23.400L16.500 15L12 12Z" fill="#2da94f" />
            <path d="M2 6.200L7 14.500L12 6.400H22Q19 .5 12 .5Q5.500 .5 2 6.200Z" fill="#e33b2e" />
            <circle cx="12" cy="12" r="5.600" fill="#fff" />
            <circle cx="12" cy="12" r="4.400" fill="#2f7bea" />
          </TaskIcon>
        </Task>
        <Task $line>
          <TaskIcon>
            <path d="M1 3H10L12 5.500H23V21H1Z" fill="#e0a21b" />
            <path d="M1 7H23V21H1Z" fill="#ffd566" />
            <path d="M5 21V14Q5 12.500 6.500 12.500H17.500Q19 12.500 19 14V21H15V16.500H9V21Z" fill="#3b97de" />
          </TaskIcon>
        </Task>
        <Task $line $active>
          <TaskIcon>
            <path d="M9 1.500Q20 -1 21 8Q22 15 15 17L13 13Q18 11 16.500 7Q15 3.500 11 6.500Q8 9 6 8Q2 6 9 1.500Z" fill="#d63a16" />
            <path d="M11 1L13 2L12 18L10 15Z" fill="#e5e5e5" />
            <path d="M14 8L9 16" stroke="#aaa" strokeWidth="2" />
            <circle cx="6" cy="18" r="2.800" fill="none" stroke="#1c8be0" strokeWidth="2" />
            <circle cx="13.500" cy="20.500" r="2.500" fill="none" stroke="#1c8be0" strokeWidth="2" />
            <path d="M8 16H16" stroke="#1c8be0" strokeWidth="2" />
          </TaskIcon>
        </Task>
        <Task>
          <TaskIcon>
            <circle cx="12" cy="12" r="11" fill="#d9410f" stroke="#eee" strokeWidth="1.600" />
            <path d="M7 10L11 13.500L7 17.500M17 6L13 10L17 13.500" fill="none" stroke="#fff" strokeWidth="2.100" />
          </TaskIcon>
        </Task>
        <Task>
          <TaskIcon>
            <path d="M2 1L19 3L20 16L5 15Z" fill="#b9bfc9" />
            <path d="M3 2.500L11 3L12 14.500L5.500 13.500Z" fill="#1010c8" />
            <path d="M11 3L18 4L18.500 14.500L12 14.500Z" fill="#6d95f0" />
            <ellipse cx="11" cy="20" rx="7" ry="3" fill="#b8bcc0" />
            <circle cx="17.500" cy="17.500" r="5.500" fill="#d8dbd8" />
            <path d="M15 18L17 20M20 15.500L17.500 17.500L19.500 19" stroke="#3a9a3a" strokeWidth="1.500" fill="none" />
          </TaskIcon>
        </Task>
        <Task $line>
          <TaskIcon>
            <rect x="2" y="1" width="17" height="22" fill="#f4f8e8" stroke="#bbb" />
            <path d="M2.500 15Q10 8 18.500 13V22.500H2.500Z" fill="#5cae2c" />
            <path d="M4 19H17" stroke="#dff5c8" strokeWidth="1.500" />
            <path d="M6.500 7V13M9 8V12M12 9.500H16" stroke="#222" strokeWidth="1.300" />
            <path d="M14 15L21 2L23 3L16 16L13.500 17.500Z" fill="#f2a91a" stroke="#9a6412" strokeWidth=".5" />
          </TaskIcon>
        </Task>
        <Task $line>
          <TaskIcon>
            <rect x="1" y="1.500" width="22" height="16" fill="#2c3234" stroke="#ccc" strokeWidth="1.300" />
            <path d="M3.500 4L6 6L3.500 8" stroke="#fff" fill="none" />
            <path d="M7 13L13 8L17 13L11 18Z" fill="#e23a3a" />
            <path d="M14 7L19 6L22 11L17 14Z" fill="#3c7be0" />
            <path d="M13 18L20 13L22 18L16 22.500Z" fill="#a7dc1c" />
            <path d="M9 16L13 14L17 18L13 21Z" fill="#ea4b4b" />
          </TaskIcon>
        </Task>
        <Task $line>
          <TaskIcon>
            <path d="M1 14L8 10L11 13L6 18Z" fill="#4b9bd0" />
            <path d="M8 10Q12 8 15 2L13 14L10 19L6 17Z" fill="#8a3020" />
            <path d="M15 1.500Q17 2 19 10Q21 16 23 18Q19 15.500 16 20L12 23L9 18Q13 15 15 1.500Z" fill="#e8641c" />
            <path d="M15 2Q16.500 12 14 22L12 23L11 20Q14 12 15 2Z" fill="#f9b23c" />
          </TaskIcon>
        </Task>
        <Task>
          <TaskIcon>
            <circle cx="13" cy="12" r="11" fill="#d6512e" />
            <path d="M13 1A11 11 0 0 1 24 12H13Z" fill="#ff8f6b" />
            <path d="M13 1V12H2A11 11 0 0 1 13 1Z" fill="#ed6c47" />
            <rect x="0" y="5.500" width="13.500" height="13.500" rx="1" fill="#bf3a1b" />
            <text x="6.800" y="16" textAnchor="middle" fontFamily={UI} fontWeight="bold" fontSize="10.500" fill="#fff">P</text>
          </TaskIcon>
        </Task>
        <Task $line><Logo w={22} h={16} /></Task>
        <Task $line>
          <TaskIcon>
            <rect x="3" y="1.500" width="17" height="21" fill="#dfe0e3" stroke="#a9a9ad" />
            <path d="M6 6H17M6 9H17M6 12H14" stroke="#b6b8be" />
            <path d="M11 18.500L20 8L23 10L14 19L11 20.500Z" fill="#3b3b3b" />
            <path d="M19.500 8.500L21 7L23.500 9L22 10.500Z" fill="#b9a27a" />
          </TaskIcon>
        </Task>
        <Task $line>
          <TaskIcon>
            <rect x=".7" y=".7" width="22.600" height="22.600" fill="#0c160a" stroke="#9fdd6a" strokeWidth="1.300" />
            <path d="M6 1V23M12 1V23M18 1V23M1 6H23M1 12H23M1 18H23" stroke="#3c7c22" strokeWidth=".8" />
            <path d="M2 20.500H5L9 3.500H15L19 20.500H22" fill="none" stroke="#7dfa22" strokeWidth="1.400" />
          </TaskIcon>
        </Task>
        <Clock>
          19:48
          <br />
          20/12/2024
        </Clock>
      </TaskBar>
    </Screen>
  );
}
